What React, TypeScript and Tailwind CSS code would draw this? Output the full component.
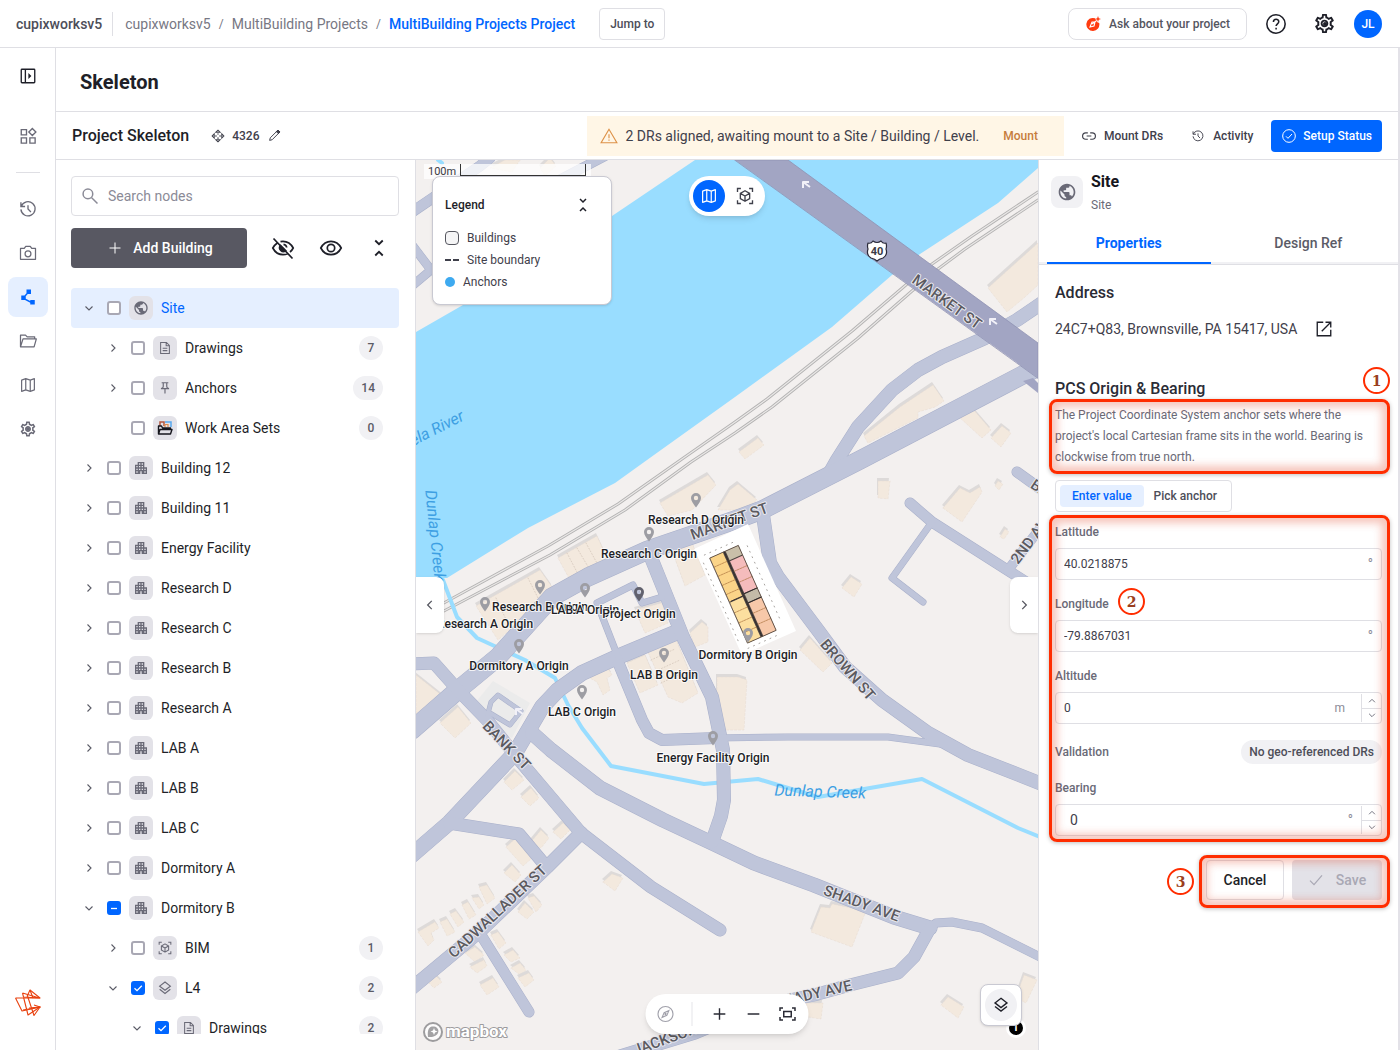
import React, { useState } from 'react';
import { MdApartment, MdOutlinePushPin, MdOutlineSettings, MdPolyline, MdPublic } from 'react-icons/md';

type IconProps = { className?: string };

function Stroke({ className = 'size-5', width = 1.5, children }: { className?: string; width?: number; children: React.ReactNode }) {
  return (
    <svg viewBox="0 0 24 24" className={className} fill="none" stroke="currentColor" strokeWidth={width} aria-hidden="true">
      {children}
    </svg>
  );
}

const PanelIcon = ({ className }: IconProps) => (
  <Stroke className={className} width={1.8}>
    <rect x="3" y="3" width="18" height="18" rx="1" />
    <path d="M8.500 3v18" />
    <path d="M12.500 8l4 4-4 4z" fill="currentColor" stroke="none" />
  </Stroke>
);

const WidgetsIcon = ({ className }: IconProps) => (
  <Stroke className={className} width={1.8}>
    <path d="M3 3.500h7v7H3zM3 14.500h7v7H3zM14.500 14.500h7v7h-7zM17.800 2l4.700 4.700-4.700 4.700-4.700-4.700z" />
  </Stroke>
);

const HistoryIcon = ({ className }: IconProps) => (
  <Stroke className={className} width={1.6}>
    <path d="M3.500 4v5h5M4 8.800A8.500 8.500 0 1 1 3.500 12.500M12 7.500V12l3.500 3.500" />
  </Stroke>
);

const CameraIcon = ({ className }: IconProps) => (
  <Stroke className={className}>
    <path d="M3 6.500h4.500l1.800-2.500h5.400l1.800 2.500H21v13H3z" strokeLinejoin="round" />
    <circle cx="12" cy="13" r="3.500" />
  </Stroke>
);

const FolderIcon = ({ className }: IconProps) => (
  <Stroke className={className}>
    <path d="M3 19V5h6l2 2h9v2.500M3 19l3-9.500h16L19.300 19z" strokeLinejoin="round" />
  </Stroke>
);

const MapIcon = ({ className }: IconProps) => (
  <Stroke className={className} width={1.6}>
    <path d="M3.500 5.500L9 3.500l6 2 5.500-2v15l-5.500 2-6-2-5.500 2zM9 3.500v15M15 5.500v15" strokeLinejoin="round" />
  </Stroke>
);

const GearIcon = ({ className }: IconProps) => (
  <span className="relative flex items-center justify-center">
    <MdOutlineSettings className={className} />
    <span className="absolute size-1 rounded-full bg-current" />
  </span>
);

const CubeIcon = ({ className }: IconProps) => (
  <Stroke className={className} width={1.8}>
    <path d="M2 6.500V2h4.500M17.500 2H22v4.500M22 17.500V22h-4.500M6.500 22H2v-4.500" />
    <path d="M12 5l6.200 3.500v7L12 19l-6.200-3.500v-7zM5.800 8.500L12 12l6.200-3.500M12 12v7" strokeLinejoin="round" />
  </Stroke>
);

const FileIcon = ({ className }: IconProps) => (
  <Stroke className={className} width={1.8}>
    <path d="M4.500 2.500h10l5 5v14h-15zM14 2.500V8h5.500M8 12.500h8M8 16.500h8" />
  </Stroke>
);

const LayersIcon = ({ className }: IconProps) => (
  <Stroke className={className} width={1.8}>
    <path d="M12 3l8 6.200-8 6.200-8-6.200zM4 14l8 6.200 8-6.200" />
  </Stroke>
);

const EyeIcon = ({ className }: IconProps) => (
  <Stroke className={className} width={1.7}>
    <path d="M1.800 12C4 7.800 7.700 5.300 12 5.300S20 7.800 22.200 12C20 16.200 16.300 18.700 12 18.700S4 16.200 1.800 12z" />
    <circle cx="12" cy="12" r="3.700" />
  </Stroke>
);

const EyeOffIcon = ({ className }: IconProps) => (
  <Stroke className={className} width={1.7}>
    <path d="M6 7.300C4.300 8.500 2.900 10 1.800 12c2.200 4.200 5.900 6.700 10.200 6.700 1.600 0 3.100-.3 4.500-1M9.500 5.600c.8-.2 1.600-.3 2.500-.3 4.300 0 8 2.500 10.200 6.700-.8 1.600-1.900 2.900-3.200 4M2.500 2.500l19 20" />
    <path d="M9.500 9.500a3.700 3.700 0 0 0 5.200 5.200z" fill="currentColor" />
    <path d="M12.500 8.300a3.700 3.700 0 0 1 3.200 3.200" />
  </Stroke>
);

const PencilIcon = ({ className }: IconProps) => (
  <Stroke className={className} width={1.8}>
    <path d="M3 21l1.200-4.700L18.500 2 22 5.500 7.700 19.800zM15.500 5L19 8.500" />
    <path d="M16 4.500l2.500-2.500L22 5.500 19.500 8z" fill="currentColor" />
  </Stroke>
);

const FoldIcon = ({ className }: IconProps) => (
  <Stroke className={className} width={2.2}>
    <path d="M7.500 3L12 7.500 16.500 3M7.500 21l4.500-4.500 4.500 4.500" />
  </Stroke>
);

const Chevron = ({ className, d }: { className?: string; d: string }) => (
  <Stroke className={className} width={2.2}>
    <path d={d} />
  </Stroke>
);
const LEFT = 'M15 5l-7 7 7 7';
const RIGHT = 'M9 5l7 7-7 7';
const DOWN = 'M5 9l7 7 7-7';
const UP = 'M5 15l7-7 7 7';

const AnchorMoveIcon = ({ className }: IconProps) => (
  <Stroke className={className} width={1.8}>
    <path d="M8.500 5.500L12 2l3.500 3.500zM8.500 18.500L12 22l3.500-3.500zM5.500 8.500L2 12l3.500 3.500zM18.500 8.500L22 12l-3.500 3.500z" />
    <path d="M12 7.500v2M12 14.500v2M7.500 12h2M14.500 12h2" strokeWidth="2.500" />
  </Stroke>
);

const WorkAreaIcon = ({ className }: IconProps) => (
  <svg viewBox="0 0 16 16" className={className} fill="none" aria-hidden="true">
    <path d="M3 6V2h4v4" stroke="#b3573f" strokeWidth="1.500" />
    <path d="M8 2h6v5" stroke="#58a9ee" strokeWidth="1.500" />
    <path d="M8 7V4.500h3V7" stroke="#e08a4c" strokeWidth="1.200" />
    <path d="M1.500 14V6h3l1 2h8v1.500M1.500 14l1.500-4.500h12L13.500 14z" stroke="#16161d" strokeWidth="1.400" strokeLinejoin="round" />
  </svg>
);

const LogoIcon = ({ className }: IconProps) => (
  <svg viewBox="0 0 26 27" className={className} fill="none" stroke="#e8410f" strokeWidth="1.100" strokeLinejoin="round" aria-hidden="true">
    <path d="M0.500 9H25L15 1 12 7.500M.5 9l6.500 13 18-4-6-2" />
    <path d="M7.500 4l17 5L8 8M7.500 4L13 26l12-8-17 3" />
    <path d="M15 1l3 8M12.500 7l6.500 19.500L25 18l-11 1" />
  </svg>
);

const railItems = [
  { label: 'Activity history', icon: <HistoryIcon className="size-5" /> },
  { label: 'Captures', icon: <CameraIcon className="size-5" /> },
  { label: 'Skeleton', icon: <MdPolyline className="size-[18px]" />, active: true },
  { label: 'Files', icon: <FolderIcon className="size-5" /> },
  { label: 'Map', icon: <MapIcon className="size-[18px]" /> },
  { label: 'Settings', icon: <GearIcon className="size-[18px]" /> },
];

type Node = { id: string; label: string; depth: number; icon: string; open?: boolean; leaf?: boolean; count?: number; state?: 'on' | 'mixed' };

const nodes: Node[] = [
  { id: 'site', label: 'Site', depth: 0, icon: 'site', open: true },
  { id: 'site-drawings', label: 'Drawings', depth: 1, icon: 'file', count: 7 },
  { id: 'anchors', label: 'Anchors', depth: 1, icon: 'pin', count: 14 },
  { id: 'work-areas', label: 'Work Area Sets', depth: 1, icon: 'work', count: 0, leaf: true },
  { id: 'b12', label: 'Building 12', depth: 0, icon: 'building' },
  { id: 'b11', label: 'Building 11', depth: 0, icon: 'building' },
  { id: 'energy', label: 'Energy Facility', depth: 0, icon: 'building' },
  { id: 'rd', label: 'Research D', depth: 0, icon: 'building' },
  { id: 'rc', label: 'Research C', depth: 0, icon: 'building' },
  { id: 'rb', label: 'Research B', depth: 0, icon: 'building' },
  { id: 'ra', label: 'Research A', depth: 0, icon: 'building' },
  { id: 'la', label: 'LAB A', depth: 0, icon: 'building' },
  { id: 'lb', label: 'LAB B', depth: 0, icon: 'building' },
  { id: 'lc', label: 'LAB C', depth: 0, icon: 'building' },
  { id: 'da', label: 'Dormitory A', depth: 0, icon: 'building' },
  { id: 'db', label: 'Dormitory B', depth: 0, icon: 'building', open: true, state: 'mixed' },
  { id: 'bim', label: 'BIM', depth: 1, icon: 'cube', count: 1 },
  { id: 'l4', label: 'L4', depth: 1, icon: 'layers', open: true, count: 2, state: 'on' },
  { id: 'l4-drawings', label: 'Drawings', depth: 2, icon: 'file', open: true, count: 2, state: 'on' },
];

const nodeIcons: Record<string, React.ReactNode> = {
  site: <MdPublic className="size-4" />,
  file: <FileIcon className="size-[14px]" />,
  pin: <MdOutlinePushPin className="size-[14px]" />,
  work: <WorkAreaIcon className="size-4" />,
  building: <MdApartment className="size-4" />,
  cube: <CubeIcon className="size-[14px]" />,
  layers: <LayersIcon className="size-4" />,
};

const indents = ['pl-2', 'pl-8', 'pl-14'];

function TreeRow({ node }: { node: Node }) {
  const [checked, setChecked] = useState(node.state !== undefined);
  const selected = node.id === 'site';
  return (
    <li className={`flex h-10 shrink-0 items-center rounded pr-4 ${indents[node.depth]} ${selected ? 'bg-[#e5efff]' : ''}`}>
      <button aria-label={`Toggle ${node.label}`} disabled={node.leaf} className={`flex w-5 justify-center text-[#5a5b66] ${node.leaf ? 'invisible' : ''}`}>
        <Chevron className="size-3" d={node.open ? DOWN : RIGHT} />
      </button>
      <span className="relative ml-2 flex size-[14px] items-center justify-center">
        <input
          id={node.id}
          type="checkbox"
          checked={checked}
          onChange={(e) => setChecked(e.target.checked)}
          className="size-full appearance-none rounded-[3px] border-2 border-[#a9a8b4] bg-white checked:border-[#0066ff] checked:bg-[#0066ff]"
        />
        {checked && (
          <svg viewBox="0 0 14 14" className="pointer-events-none absolute inset-0" fill="none" stroke="#fff" strokeWidth="1.300">
            <path d={node.state === 'mixed' ? 'M4 7.500h6' : 'M3.500 7.300l2.500 2.400 4.800-5'} />
          </svg>
        )}
      </span>
      <span className="ml-2 flex size-6 items-center justify-center rounded-md bg-[#e3e2e8] text-[#6a6a77]">{nodeIcons[node.icon]}</span>
      <label htmlFor={node.id} className={`ml-2 flex-1 truncate text-sm ${selected ? 'text-[#0066ff]' : 'text-[#1e1f28]'}`}>
        {node.label}
      </label>
      {node.count !== undefined && (
        <span className="flex h-6 min-w-6 items-center justify-center rounded-full bg-[#f1f1f4] px-2 text-xs font-medium text-[#5b5b66]">{node.count}</span>
      )}
    </li>
  );
}

const shore = 'M416 332L463 305L612 216L695 160H1038V168L998 203L920 254L892 275L832 327L735 397L647 460L615 483L528 528L447 578H416Z';

const rails = [
  'M1038 192L972 236L932 264L907 284L852 331L767 399L735 422L682 459L618 504L548 546L442 604L416 616',
  'M1038 200L965 249L938 269L912 291L857 339L772 407L735 433L691 462L625 510L550 555L442 612L416 624',
];

const creeks = [
  'M443 580L457 617L477 638L525 660L555 678L568 705L582 728L611 766L704 784L758 779L778 785L818 797L922 779L1018 828L1040 837',
  'M438 160l4 3',
];

const roads: { d: string; w: number }[] = [
  { d: 'M1042 303L1017 320L985 338L942 357L918 370L892 390L858 427L837 460L828 476', w: 13 },
  { d: 'M1036 368L860 460L762 510L735 520L692 535L648 550L588 577L552 597L498 657L458 690L412 730', w: 18 },
  { d: 'M412 664L434 663L458 690L487 720L515 755L581 833L651 887L720 930', w: 12 },
  { d: 'M581 833L547 867L479 932L412 988', w: 13 },
  { d: 'M675 633L615 658L582 673L558 690L542 707L515 753L449 823L412 855', w: 15 },
  { d: 'M449 823L519 834L545 865', w: 12 },
  { d: 'M532 733L551 750L600 788L663 820L712 843L754 863L814 885L894 917L930 928', w: 14 },
  { d: 'M928 930L936 923L952 922L982 928L1042 958', w: 8 },
  { d: 'M930 928L914 957L898 973L850 985L814 995L760 1006L695 1033L620 1056', w: 12 },
  { d: 'M481 935L529 1012', w: 10 },
  { d: 'M650 555L683 637L712 697L723 750L724 800L721 816L712 842', w: 13 },
  { d: 'M616 657L642 720L649 733L662 740L716 738', w: 11 },
  { d: 'M716 738L788 737L888 737L940 744', w: 6 },
  { d: 'M618 657L597 603L633 585L642 603L662 597', w: 6 },
  { d: 'M763 515L770 563L778 577L820 633L845 667L882 700L928 733L968 755L1042 784', w: 13 },
  { d: 'M910 503L932 522L1012 573L1042 592', w: 10 },
  { d: 'M932 522L892 578L923 602', w: 6 },
  { d: 'M1008 570L1042 526', w: 9 },
  { d: 'M1017 472L1042 490', w: 10 },
  { d: 'M412 212L480 166L490 158', w: 10 },
  { d: 'M540 190L605 156', w: 9 },
  { d: 'M412 245L431 270L412 286', w: 8 },
  { d: 'M487 717L491 702L498 695L521 711L510 725L490 713', w: 4 },
];

const buildings = [
  '864,436 900,407 933,385 944,401 935,407 918,412 918,418 868,443',
  '958,416 972,408 991,430 982,438',
  '1002,426 1011,433 1001,447 991,438',
  '1038,243 988,288 1007,312 1025,297 1038,285',
  '739,452 758,438 764,445 745,459',
  '660,503 708,475 716,485 692,510 668,516',
  '558,558 597,536 608,560 570,580',
  '476,606 540,570 552,587 552,593 498,640',
  '627,663 645,655 658,685 640,693',
  '647,650 675,637 698,693 682,703 668,697',
  '635,610 662,603 668,623 645,633',
  '690,633 702,622 708,627 708,642 695,647',
  '588,677 608,668 612,675 607,678 610,690 603,695 597,682',
  '717,677 738,677 747,680 744,730 717,730',
  '416,675 445,698 443,705 432,718 416,720',
  '440,723 458,707 471,723 455,738',
  '718,510 730,490 738,484 757,500 745,510',
  '670,545 690,538 705,575 685,586',
  '878,481 890,481 888,499 878,498',
  '943,508 960,488 970,493 980,487 982,492 962,522',
  '995,486 998,481 1003,484 999,490',
  '1000,537 1005,529 1009,532 1004,539',
  '842,588 851,577 862,584 854,597',
  '800,650 810,638 832,663 823,672',
  '504,782 515,771 524,780 512,790',
  '521,797 531,788 539,798 530,806',
  '531,842 541,830 549,838 541,848',
  '553,832 563,823 570,830 561,839',
  '506,847 515,839 532,858 523,866',
  '504,873 512,865 521,875 515,882',
  '603,882 612,874 623,878 615,891',
  '821,907 830,908 832,904 866,911 852,947 811,932',
  '941,1005 948,997 964,1007 958,1018',
  '1024,975 1037,980 1026,1003 1016,998',
  '806,1003 823,1003 821,1019 808,1017',
  '479,887 487,885 495,898 487,904',
  '472,898 479,897 484,905 479,909',
  '462,905 468,902 476,915 469,919',
  '450,914 456,911 464,922 458,927',
  '440,922 447,919 455,932 447,936',
  '418,932 435,922 439,928 431,933 434,940 428,946',
  '518,912 525,903 534,912 527,919',
  '528,898 534,896 542,905 536,912',
  '491,935 498,932 506,943 499,949',
  '465,953 475,947 484,955 475,962',
  '470,967 484,960 487,966 477,973',
  '504,955 513,950 520,958 511,962',
  '511,968 520,963 526,970 520,975',
  '518,978 529,973 534,980 525,987',
  '480,985 493,978 499,987 487,995',
  '426,980 435,975 442,982 434,988',
  '490,168 505,160 520,160 512,172',
  '540,168 550,158 556,166 545,176',
];

const streets = [
  { text: 'MARKET ST', x: 944, y: 306, r: 36 },
  { text: 'MARKET ST', x: 731, y: 526, r: -20 },
  { text: 'BROWN ST', x: 844, y: 673, r: 49 },
  { text: 'BANK ST', x: 503, y: 749, r: 46 },
  { text: 'CADWALLADER ST', x: 501, y: 915, r: -43 },
  { text: 'SHADY AVE', x: 860, y: 908, r: 20 },
  { text: 'SHADY AVE', x: 814, y: 999, r: -13 },
  { text: 'JACKSON', x: 667, y: 1044, r: -20 },
  { text: '2ND AVE', x: 1036, y: 541, r: -53 },
  { text: 'BANK', x: 1046, y: 498, r: 33 },
];

const anchors = [
  { name: 'Research D Origin', x: 696, y: 500 },
  { name: 'Research C Origin', x: 649, y: 534 },
  { name: 'Research B Origin', x: 540, y: 587 },
  { name: 'LAB A Origin', x: 585, y: 590 },
  { name: 'Project Origin', x: 639, y: 594, dark: true },
  { name: 'Research A Origin', x: 485, y: 604 },
  { name: 'Dormitory A Origin', x: 519, y: 646 },
  { name: 'LAB B Origin', x: 664, y: 655 },
  { name: 'LAB C Origin', x: 582, y: 692 },
  { name: 'Energy Facility Origin', x: 713, y: 738 },
  { name: 'Dormitory B Origin', x: 748, y: 635 },
];

function MapCanvas() {
  return (
    <svg
      viewBox="416 160 622 890"
      preserveAspectRatio="xMidYMid slice"
      className="absolute inset-0 size-full font-['Roboto',sans-serif]"
      strokeLinecap="round"
      strokeLinejoin="round"
    >
      <rect x="416" y="160" width="622" height="890" fill="#f3f0ef" />
      <path d="M476 702L493 681L530 703L512 738L490 728z" fill="#ebebeb" />
      <path d={shore} fill="#99ddff" />
      {rails.map((d) => (
        <g key={d} fill="none">
          <path d={d} stroke="#b3b2b2" strokeWidth="3" />
          <path d={d} stroke="#eae8e7" strokeWidth="1.200" />
        </g>
      ))}
      {buildings.map((points) => (
        <g key={points}>
          <polygon points={points} fill="#dddad9" transform="translate(-1 -3)" />
          <polygon points={points} fill="#f3e9de" stroke="#e6dbd0" strokeWidth="0.500" strokeDasharray="2 2" />
        </g>
      ))}
      <path d="M577 548l13 22M567 553l12 23M586 543l12 22M496 598l14 30M528 578l13 26M651 660l24-11M656 671l24-11M661 683l24-11" stroke="#dccfc3" strokeWidth="1" strokeDasharray="1 2" />
      {creeks.map((d) => (
        <path key={d} d={d} fill="none" stroke="#99ddff" strokeWidth="4" />
      ))}
      <g fill="none">
        {roads.map((r) => (
          <path key={r.d} d={r.d} stroke="#a9b0ca" strokeWidth={r.w + 1} />
        ))}
        {roads.map((r) => (
          <path key={r.d} d={r.d} stroke="#bfc5da" strokeWidth={r.w} />
        ))}
      </g>
      <path d="M1023 381l10-3 5 5v10z" fill="#a2a5c3" />
      <path d="M735 160H788L1038 343V378Z" fill="#a2a5c3" stroke="#8f92b2" strokeWidth="0.800" />
      <g fill="none" stroke="#f2f1f8" strokeWidth="2" strokeLinecap="butt">
        <path d="M810 187l-7-5M803 188v-6h6" />
        <path d="M997 324l-7-5M990 325v-6h6" />
        <path d="M523 714l-7-5M516 715v-6h6" />
      </g>

      {/* drawing sheet laid over Dormitory B */}
      <path d="M694 549L748 524L796 631L742 655Z" fill="#fff" />
      <g transform="translate(710 558) rotate(-24)">
        <rect width="31" height="93" fill="#4c4441" />
        <rect x="0" y="0" width="14" height="48" fill="#fbd488" />
        <rect x="0" y="49" width="14" height="44" fill="#fcdf9f" />
        <rect x="17" y="0" width="14" height="10" fill="#c9bfa9" />
        <rect x="17" y="11" width="14" height="35" fill="#f5bcbc" />
        <rect x="17" y="47" width="14" height="9" fill="#c4bba8" />
        <rect x="17" y="57" width="14" height="36" fill="#f7c8a9" />
        <path d="M0 10h14M0 20h14M0 30h14M0 40h14M0 60h14M0 71h14M0 82h14M17 22h14M17 34h14M17 68h14M17 80h14" stroke="#a9703c" strokeWidth="0.600" strokeDasharray="2 1" fill="none" />
        <path d="M2 48h12M15.500 0v93M17 46.500h14M17 56.500h14" stroke="#2f2a2a" strokeWidth="0.800" fill="none" />
        <rect width="31" height="93" fill="none" stroke="#5a4a40" strokeWidth="0.800" />
        <path d="M-8 2v88M39 4v84M-4 -5h36M-2 98h34" stroke="#8d8884" strokeWidth="0.700" strokeDasharray="1 5" fill="none" />
      </g>

      <g textAnchor="middle" paintOrder="stroke" strokeWidth="2">
        {streets.map((s) => (
          <text key={`${s.text}${s.x}`} transform={`translate(${s.x} ${s.y}) rotate(${s.r})`} fontSize="15" fontWeight="500" fill="#5b5a60" stroke="#e9e9ef">
            {s.text}
          </text>
        ))}
        <g fontSize="16" fontStyle="italic" fill="#3d9fe3" stroke="none">
          <text transform="translate(439 433) rotate(-27)">ela River</text>
          <text transform="translate(430 536) rotate(84)">Dunlap Creek</text>
          <text transform="translate(820 797) rotate(2)">Dunlap Creek</text>
        </g>
      </g>

      <path d="M868 243q3 1 5-2q4 3 8 0q2 3 5 2q1 3 0 6q2 6-3 9q-4 1-6 3q-2-2-6-3q-5-3-3-9q-1-3 0-6z" fill="#fff" stroke="#2a2a3a" strokeWidth="1.200" />
      <text x="877" y="255" textAnchor="middle" fontSize="11" fontWeight="700" fill="#3b3b45">
        40
      </text>

      {anchors.map((a) => (
        <path
          key={a.name}
          transform={`translate(${a.x} ${a.y})`}
          d="M0 7.500C-2.500 4-5 1-5-2a5 5 0 0 1 10 0C5 1 2.500 4 0 7.500zM0-4.200a2.200 2.200 0 1 0 0 4.400 2.200 2.200 0 0 0 0-4.400z"
          fillRule="evenodd"
          fill={a.dark ? '#61616d' : '#9d9da3'}
        />
      ))}
      <g textAnchor="middle" fontSize="12" fontWeight="500" fill="#1d1e26" stroke="#fff" strokeOpacity="0.800" strokeWidth="2" paintOrder="stroke">
        {anchors.map((a) => (
          <text key={a.name} x={a.x} y={a.y + 24}>
            {a.name}
          </text>
        ))}
      </g>
      <g transform="translate(433 1032)">
        <circle r="9" fill="#fff" fillOpacity="0.800" stroke="#9d9c9e" strokeWidth="2" />
        <path d="M-5 5c-1-9 2-11 6-10.500s6 5 3 8-6 2.500-9 2.500z" fill="#a3a2a4" />
        <path d="M1-4l1 2.500 2.500 1-2.500 1-1 2.500-1-2.500-2.500-1 2.500-1z" fill="#fff" />
      </g>
      <text x="446" y="1037" fontSize="17" fontWeight="700" fill="#fff" stroke="#9d9c9e" strokeWidth="2" paintOrder="stroke">
        mapbox
      </text>
    </svg>
  );
}

function MapView() {
  return (
    <section aria-label="Map" className="relative min-w-0 flex-1 overflow-hidden">
      <MapCanvas />

      <div className="absolute top-1 left-2 flex h-[15px] w-[167px] items-start bg-white/75 pl-1 text-[11px] leading-[15px] text-[#3a3a42]">
        100m
        <span className="ml-1 h-3 w-[126px] border border-t-0 border-[#333]" />
      </div>

      <div className="absolute top-4 left-4 w-[180px] rounded-lg border border-[#c9c9d2] bg-white px-3 pt-3 pb-[11px] text-xs text-[#3f404b] shadow">
        <div className="flex h-8 items-center justify-between pr-1">
          <h3 className="font-medium text-[#1e1f28]">Legend</h3>
          <button aria-label="Collapse legend" className="flex size-6 items-center justify-center text-[#1e1f28]">
            <FoldIcon className="size-4" />
          </button>
        </div>
        <ul className="mt-[6px]">
          <li className="flex h-[22px] items-center gap-2">
            <span className="size-[14px] rounded border border-[#55565f] bg-[#f5f5f6]" />
            Buildings
          </li>
          <li className="flex h-[22px] items-center gap-2">
            <span className="flex w-[14px] justify-between">
              <span className="h-[2px] w-[6px] bg-[#3f404b]" />
              <span className="h-[2px] w-[6px] bg-[#3f404b]" />
            </span>
            Site boundary
          </li>
          <li className="flex h-[22px] items-center gap-2">
            <span className="size-[10px] rounded-full bg-[#3eaaf0]" />
            Anchors
          </li>
        </ul>
      </div>

      <div className="absolute top-4 left-1/2 flex -translate-x-1/2 gap-1 rounded-full bg-white p-1 shadow-md">
        <button aria-label="Map view" className="flex size-8 items-center justify-center rounded-full bg-[#0066ff] text-white">
          <MapIcon className="size-[18px]" />
        </button>
        <button aria-label="3D view" className="flex size-8 items-center justify-center rounded-full text-[#3f404b]">
          <CubeIcon className="size-[18px]" />
        </button>
      </div>

      <button aria-label="Hide tree" className="absolute top-[417px] left-0 flex h-14 w-7 items-center justify-center rounded-r-lg bg-white text-[#55565f] shadow">
        <Chevron className="size-[14px]" d={LEFT} />
      </button>
      <button aria-label="Hide details" className="absolute top-[417px] right-0 flex h-14 w-7 items-center justify-center rounded-l-lg bg-white text-[#55565f] shadow">
        <Chevron className="size-[14px]" d={RIGHT} />
      </button>

      <div className="absolute bottom-4 left-1/2 flex h-10 -translate-x-1/2 items-center rounded-full bg-white px-1 text-[#2a2b35] shadow-md">
        <button aria-label="Compass" className="flex size-8 items-center justify-center text-[#a0a0aa]">
          <Stroke className="size-[18px]">
            <circle cx="12" cy="12" r="10" />
            <path d="M16.500 7.500l-2.700 6.300-6.300 2.700 2.700-6.300z" />
            <circle cx="12" cy="12" r="0.800" />
          </Stroke>
        </button>
        <span className="mx-[10px] h-6 w-px bg-[#e6e6ea]" />
        <button aria-label="Zoom in" className="flex w-[34px] justify-center">
          <Stroke className="size-[14px]" width={2.4}>
            <path d="M12 2v20M2 12h20" />
          </Stroke>
        </button>
        <button aria-label="Zoom out" className="flex w-[34px] justify-center">
          <Stroke className="size-[14px]" width={2.4}>
            <path d="M2 12h20" />
          </Stroke>
        </button>
        <button aria-label="Fit to screen" className="flex w-[34px] justify-center">
          <Stroke className="size-[18px]" width={2}>
            <path d="M2 8V4h4M18 4h4v4M22 16v4h-4M6 20H2v-4M7 8.500h10v7H7z" />
          </Stroke>
        </button>
      </div>

      <span className="absolute right-3 bottom-3 flex size-5 items-center justify-center rounded-full border-[3px] border-white bg-black text-[11px] font-bold text-white">i</span>
      <button aria-label="Layers" className="absolute right-4 bottom-6 flex size-[42px] items-center justify-center rounded-lg border border-[#c9c9d2] bg-white shadow">
        <span className="flex size-8 items-center justify-center rounded-full bg-[#f1f1f4] text-[#1e1f28]">
          <LayersIcon className="size-[18px]" />
        </span>
      </button>
    </section>
  );
}

function Frame({ className }: { className: string }) {
  return <span className={`pointer-events-none absolute rounded-lg border-3 border-[#ff2d00] shadow-[inset_0_0_8px_5px_rgba(226,60,25,0.3),0_1px_4px_rgba(0,0,0,0.25)] ${className}`} />;
}

function Callout({ n, className }: { n: number; className: string }) {
  return (
    <span className={`absolute flex size-[27px] items-center justify-center rounded-full border-[2px] border-[#ff2d00] bg-white font-['DejaVu_Serif',serif] text-sm leading-4 font-bold text-[#9a3e20] ${className}`}>
      {n}
    </span>
  );
}

function Stepper() {
  return (
    <span className="my-px flex w-5 flex-col divide-y divide-[#dfdfe4] border-l border-[#dfdfe4] text-[#6a6a77]">
      <button aria-label="Increase" className="flex flex-1 items-center justify-center">
        <Chevron className="size-[10px]" d={UP} />
      </button>
      <button aria-label="Decrease" className="flex flex-1 items-center justify-center">
        <Chevron className="size-[10px]" d={DOWN} />
      </button>
    </span>
  );
}

function Field({ id, label, value, unit, stepper, large }: { id: string; label: string; value: string; unit: string; stepper?: boolean; large?: boolean }) {
  return (
    <div>
      <label htmlFor={id} className="block h-6 text-xs leading-4 font-medium text-[#6a6a77]">
        {label}
      </label>
      <div className="flex h-8 rounded border border-[#dfdfe4]">
        <input id={id} defaultValue={value} className={`min-w-0 flex-1 bg-transparent text-[#3f404b] outline-none ${large ? 'px-[14px] text-sm' : 'px-2 text-xs'}`} />
        <span className={`self-center text-[#8b8b97] ${unit === 'm' ? 'mr-4 text-xs' : 'mr-2 text-sm'}`}>{unit}</span>
        {stepper && <Stepper />}
      </div>
    </div>
  );
}

function DetailsPanel() {
  return (
    <aside className="flex w-[360px] shrink-0 flex-col border-l border-[#dfdfe4] bg-white">
      <div className="flex gap-2 px-3 pt-[11px]">
        <span className="mt-[5px] flex size-8 items-center justify-center rounded-lg bg-[#f1f1f4] text-[#6a6a77]">
          <MdPublic className="size-5" />
        </span>
        <div>
          <h2 className="text-base leading-[22px] font-bold text-[#16161d]">Site</h2>
          <p className="text-xs leading-6 text-[#6a6a77]">Site</p>
        </div>
      </div>
      <div className="mt-[7px] flex border-b border-[#dfdfe4] text-sm font-medium">
        <div className="flex flex-1 border-b-2 border-[#f1f1f4] px-2">
          <button className="-mb-[2px] h-10 flex-1 border-b-2 border-[#0066ff] font-bold text-[#0066ff]">Properties</button>
        </div>
        <div className="flex flex-1 border-b-2 border-[#f1f1f4] px-2">
          <button className="flex-1 text-[#5b5b66]">Design Ref</button>
        </div>
      </div>

      <div className="px-4 pt-4">
        <h3 className="text-base font-medium text-[#2a2b35]">Address</h3>
        <p className="mt-[14px] flex items-center gap-[18px] text-sm text-[#3f404b]">
          24C7+Q83, Brownsville, PA 15417, USA
          <a href="#map" aria-label="Open in map" className="text-[#1e1f28]">
            <Stroke className="size-[18px]" width={1.8}>
              <path d="M11 3H3v18h18v-8M14 3h7v7M21 3L9 15" />
            </Stroke>
          </a>
        </p>

        <div className="relative mt-[38px]">
          <h3 className="text-base leading-6 font-medium text-[#2a2b35]">PCS Origin &amp; Bearing</h3>
          <Callout n={1} className="-top-[10px] -right-2" />
        </div>
        <div className="relative mt-1">
          <p className="text-xs leading-[21px] text-[#6a6a77]">
            The Project Coordinate System anchor sets where the project's local Cartesian frame sits in the world. Bearing is clockwise from true north.
          </p>
          <Frame className="-top-[6px] -right-2 -bottom-[6px] -left-[6px]" />
        </div>

        <div className="mt-3 inline-flex h-8 items-center rounded border border-[#dfdfe4] px-1 text-xs font-medium">
          <button className="h-[22px] rounded bg-[#e5efff] px-3 text-[#0066ff]">Enter value</button>
          <button className="h-[22px] px-[10px] text-[#4d4e59]">Pick anchor</button>
        </div>

        <div className="relative mt-3 flex flex-col gap-4">
          <Field id="latitude" label="Latitude" value="40.0218875" unit="°" />
          <Field id="longitude" label="Longitude" value="-79.8867031" unit="°" />
          <Field id="altitude" label="Altitude" value="0" unit="m" stepper />
          <div className="flex items-center justify-between text-xs font-medium">
            <span className="text-[#6a6a77]">Validation</span>
            <span className="rounded-full bg-[#f1f1f4] px-2 py-1 text-[#4d4e59]">No geo-referenced DRs</span>
          </div>
          <Field id="bearing" label="Bearing" value="0" unit="°" stepper large />
          <Frame className="-top-[9px] -right-2 -bottom-[6px] -left-[6px]" />
          <Callout n={2} className="top-16 left-[63px]" />
        </div>

        <div className="mt-6 flex justify-end">
          <div className="relative flex gap-2 text-sm font-medium">
            <button className="h-10 w-[78px] rounded border border-[#dfdfe4] text-[#1e1f28]">Cancel</button>
            <button disabled className="flex h-10 w-[90px] items-center justify-center gap-3 rounded bg-[#e3e2e8] text-[#a9a8b4]">
              <Stroke className="size-4" width={1.8}>
                <path d="M3 13l6 6L21 5" />
              </Stroke>
              Save
            </button>
            <Frame className="-top-[5px] -right-2 -bottom-2 -left-[7px]" />
            <Callout n={3} className="top-2 -left-[39px]" />
          </div>
        </div>
      </div>
    </aside>
  );
}

export default function App() {
  return (
    <div className="flex h-screen flex-col overflow-hidden bg-white font-['Roboto',sans-serif] text-[#1e1f28]">
      <header className="flex h-12 shrink-0 items-center border-b border-[#dfdfe4] pr-[18px] pl-4">
        <span className="text-sm font-medium text-[#4d4e59]">cupixworksv5</span>
        <nav aria-label="Breadcrumb" className="ml-[10px] flex h-6 items-center gap-2 border-l border-[#dfdfe4] pl-3 text-sm text-[#777783]">
          <a href="#team">cupixworksv5</a>
          <span className="text-xs">/</span>
          <a href="#projects">MultiBuilding Projects</a>
          <span className="text-xs">/</span>
          <a href="#project" className="font-medium text-[#0066ff]">
            MultiBuilding Projects Project
          </a>
        </nav>
        <button className="ml-6 h-8 rounded border border-[#dfdfe4] px-[10px] text-xs font-medium text-[#4d4e59]">Jump to</button>
        <div className="ml-auto flex items-center">
          <button className="flex h-8 items-center gap-2 rounded-lg border border-[#dfdfe4] px-4 text-xs font-medium text-[#55565f]">
            <svg viewBox="0 0 16 16" className="size-4" aria-hidden="true">
              <path d="M10 2.300A6.500 6.500 0 1 0 14.200 7L12 6z" fill="#ff3b10" />
              <path d="M5 11l2-5 3 0-1 4zM7 8l4-3" stroke="#fff" strokeWidth="1.100" fill="none" />
              <path d="M13 0l.8 2.200L16 3l-2.200.8L13 6l-.8-2.200L10 3l2.200-.8z" fill="#ff3b10" />
            </svg>
            Ask about your project
          </button>
          <button aria-label="Help" className="ml-[18px]">
            <Stroke className="size-[22px]" width={1.7}>
              <circle cx="12" cy="12" r="10" />
              <path d="M9.200 9.800c0-3.800 5.800-3.800 5.800-.3 0 2.200-2.900 2.400-2.900 4.800M12.100 16v2" />
            </Stroke>
          </button>
          <button aria-label="Settings" className="ml-[26px]">
            <GearIcon className="size-[23px]" />
          </button>
          <span className="ml-[18px] flex size-7 items-center justify-center rounded-full bg-[#0066ff] text-xs font-medium text-white">JL</span>
        </div>
      </header>

      <div className="flex min-h-0 flex-1">
        <nav aria-label="Main" className="flex w-14 shrink-0 flex-col items-center border-r border-[#dfdfe4] pt-2 text-[#6a6a77]">
          <button aria-label="Expand menu" className="flex size-10 items-center justify-center text-[#1e1f28]">
            <PanelIcon className="size-[18px]" />
          </button>
          <button aria-label="Overview" className="mt-5 flex size-10 items-center justify-center">
            <WidgetsIcon className="size-[18px]" />
          </button>
          <span className="mt-4 mb-4 h-px w-6 shrink-0 bg-[#dfdfe4]" />
          <div className="flex flex-col gap-1">
            {railItems.map((item) => (
              <button
                key={item.label}
                aria-label={item.label}
                className={`flex size-10 items-center justify-center rounded-lg ${item.active ? 'bg-[#e5efff] text-[#0066ff]' : ''}`}
              >
                {item.icon}
              </button>
            ))}
          </div>
          <LogoIcon className="mt-auto mb-[34px] h-[27px] w-[26px]" />
        </nav>

        <main className="flex min-w-0 flex-1 flex-col border-r-2 border-[#e3e2e8]">
          <div className="flex h-16 shrink-0 items-center border-b border-[#dfdfe4] px-6 pt-1">
            <h1 className="text-xl font-bold">Skeleton</h1>
          </div>
          <div className="flex h-12 shrink-0 items-center border-b border-[#dfdfe4] px-4 text-xs font-medium text-[#3f404b]">
            <h2 className="text-base text-[#1e1f28]">Project Skeleton</h2>
            <AnchorMoveIcon className="ml-[22px] size-[14px]" />
            <span className="ml-[7px]">4326</span>
            <button aria-label="Edit coordinate system" className="ml-2">
              <PencilIcon className="size-[13px]" />
            </button>
            <div className="ml-auto flex h-10 items-center bg-[#fff6e6] pr-[26px] pl-[13px]">
              <Stroke className="size-[18px] text-[#dd9147]">
                <path d="M12 3L1.500 21h21zM12 9.500V15M12 16.800v1.500" />
              </Stroke>
              <span className="ml-2 text-sm font-normal">2 DRs aligned, awaiting mount to a Site / Building / Level.</span>
              <button className="ml-6 text-xs text-[#c67c3c]">Mount</button>
            </div>
            <button className="ml-[18px] flex items-center gap-2">
              <Stroke className="size-[14px]" width={2}>
                <path d="M10 6.500H6.500a5.500 5.500 0 0 0 0 11H10M14 6.500h3.500a5.500 5.500 0 0 1 0 11H14M8 12h8" />
              </Stroke>
              Mount DRs
            </button>
            <button className="ml-7 flex items-center gap-2">
              <HistoryIcon className="size-[14px]" />
              Activity
            </button>
            <button className="ml-[18px] flex h-8 items-center gap-[6px] rounded bg-[#0066ff] px-[10px] text-white">
              <Stroke className="size-4">
                <circle cx="12" cy="12" r="9.500" />
                <path d="M7.500 12.500l3 3 6-6.500" />
              </Stroke>
              Setup Status
            </button>
          </div>

          <div className="flex min-h-0 flex-1">
            <aside className="flex w-[360px] shrink-0 flex-col border-r border-[#dfdfe4] py-4 pr-4 pl-[15px]">
              <label className="flex h-10 shrink-0 items-center gap-2 rounded border border-[#dfdfe4] px-2">
                <Stroke className="size-5 text-[#8b8b97]" width={1.8}>
                  <circle cx="9.500" cy="9.500" r="5.800" />
                  <path d="M14 14l7 7" />
                </Stroke>
                <input type="search" placeholder="Search nodes" aria-label="Search nodes" className="min-w-0 flex-1 text-sm outline-none placeholder:text-[#8b8b97]" />
              </label>
              <div className="mt-3 flex h-10 shrink-0 items-center">
                <button className="flex h-10 w-44 items-center justify-center gap-3 rounded bg-[#585862] pl-1 text-sm font-medium text-white">
                  <Stroke className="size-3" width={2}>
                    <path d="M12 1v22M1 12h22" />
                  </Stroke>
                  Add Building
                </button>
                <div className="-mr-1 ml-auto flex">
                  <button aria-label="Hide all" className="flex h-10 w-12 items-center justify-center">
                    <EyeOffIcon className="size-6" />
                  </button>
                  <button aria-label="Show all" className="flex h-10 w-12 items-center justify-center">
                    <EyeIcon className="size-6" />
                  </button>
                  <button aria-label="Collapse all" className="flex h-10 w-12 items-center justify-center">
                    <FoldIcon className="size-5" />
                  </button>
                </div>
              </div>
              <ul className="mt-5 flex min-h-0 flex-1 flex-col overflow-hidden">
                {nodes.map((node) => (
                  <TreeRow key={node.id} node={node} />
                ))}
              </ul>
            </aside>
            <MapView />
            <DetailsPanel />
          </div>
        </main>
      </div>
    </div>
  );
}
